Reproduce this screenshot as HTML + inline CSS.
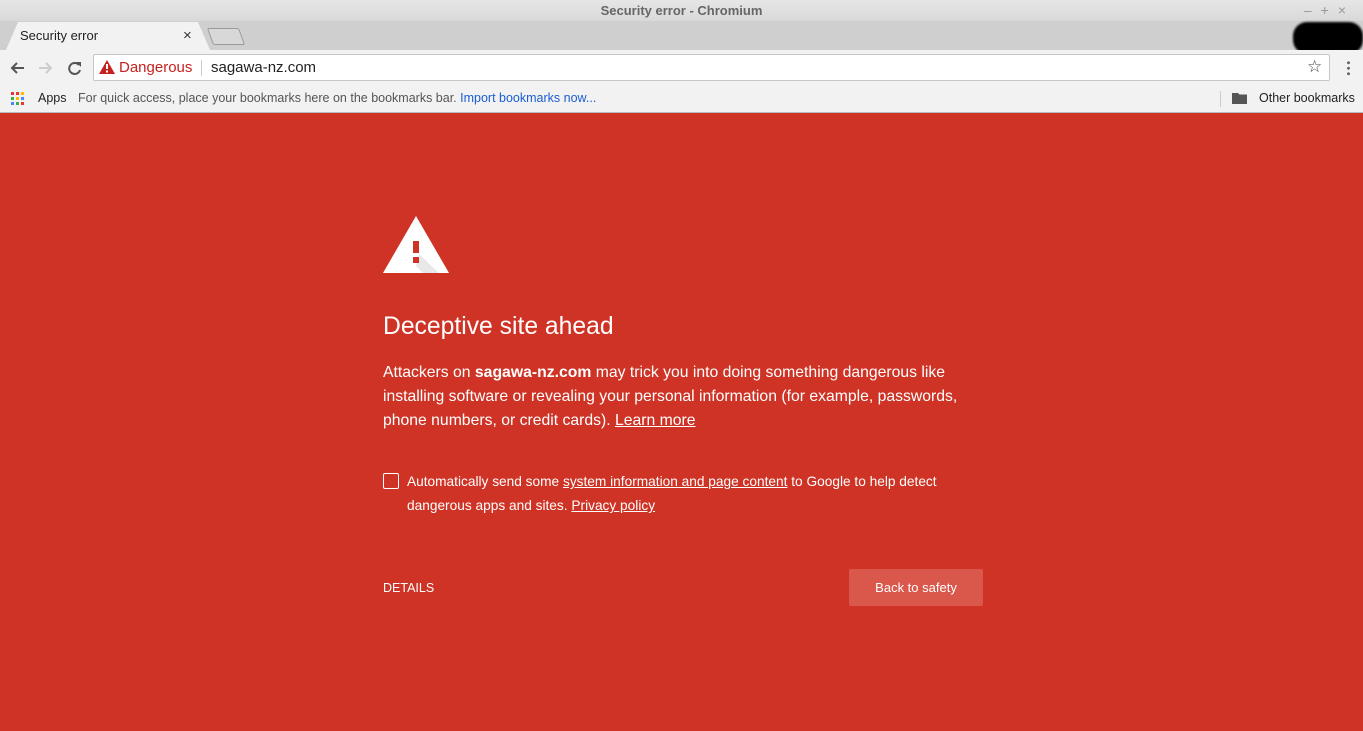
<!DOCTYPE html>
<html><head><meta charset="utf-8"><style>
*{margin:0;padding:0;box-sizing:border-box}
body{width:1363px;height:731px;overflow:hidden;font-family:"Liberation Sans",sans-serif;background:#ce3325;position:relative}
.abs{position:absolute}
#title{left:0;top:0;width:1363px;height:21px;background:linear-gradient(#e6e6e6,#d9d9d9);text-align:center;font-size:13px;font-weight:bold;color:#666;line-height:21px}
#tabbar{left:0;top:21px;width:1363px;height:29px;background:#cfcfcf}
#tab{left:6px;top:22px;width:204px;height:28px;background:#f2f2f2;clip-path:polygon(12px 0,192px 0,204px 28px,0 28px);}
#toolbar{left:0;top:50px;width:1363px;height:36px;background:#f2f2f2}
#omni{left:93px;top:54px;width:1237px;height:27px;background:#fff;border:1px solid #c6c6c6;border-radius:2px}
#bm{left:0;top:86px;width:1363px;height:27px;background:#f2f2f2;border-bottom:1px solid #bbb}
.w{color:#fff}
</style></head><body>
<div id="title" class="abs">Security error - Chromium</div>
<div class="abs" style="right:8px;top:2px;font-size:14px;color:#999;letter-spacing:9px">–+×</div>
<div id="tabbar" class="abs"></div>
<div id="tab" class="abs"></div>
<div class="abs" style="left:20px;top:28px;font-size:13px;color:#222">Security error</div>
<div class="abs" style="left:183px;top:27px;font-size:15px;color:#333">×</div>
<div class="abs" style="left:210px;top:28px;width:32px;height:17px;border:1px solid #999;background:#d8d8d8;transform:skewX(20deg);border-radius:2px"></div>
<div class="abs" style="left:1293px;top:22px;width:70px;height:32px;background:#000;border-radius:14px;filter:blur(1px)"></div>
<div id="toolbar" class="abs"></div>
<svg class="abs" style="left:8px;top:59px" width="80" height="18" viewBox="0 0 80 18">
<path d="M16 9H4M9 4L4 9l5 5" stroke="#555" stroke-width="2" fill="none"/>
<path d="M31 9h12M38 4l5 5-5 5" stroke="#ccc" stroke-width="2" fill="none"/>
<path d="M71 6A5.5 5.5 0 1 0 72 11" stroke="#555" stroke-width="2" fill="none"/><path d="M68 3h5v5z" fill="#555"/>
</svg>
<div id="omni" class="abs"></div>
<svg class="abs" style="left:99px;top:60px" width="16" height="14"><path d="M8 0L16 14H0z" fill="#c5221f"/><rect x="7" y="4" width="2" height="5" fill="#fff"/><rect x="7" y="10.5" width="2" height="2" fill="#fff"/></svg>
<div class="abs" style="left:119px;top:59px;font-size:15px;color:#c5221f">Dangerous</div>
<div class="abs" style="left:201px;top:60px;width:1px;height:16px;background:#ccc"></div>
<div class="abs" style="left:211px;top:59px;font-size:15px;color:#222">sagawa-nz.com</div>
<div class="abs" style="left:1307px;top:57px;font-size:17px;color:#444">☆</div>
<div class="abs" style="left:1347px;top:60px;width:3px;height:16px;background:radial-gradient(circle,#666 1.4px,transparent 1.6px) 0 0/3px 5.5px"></div>
<div id="bm" class="abs"></div>
<svg class="abs" style="left:11px;top:92px" width="13" height="13">
<rect x="0" y="0" width="3" height="3" fill="#e33"/><rect x="5" y="0" width="3" height="3" fill="#e33"/><rect x="10" y="0" width="3" height="3" fill="#fb0"/>
<rect x="0" y="5" width="3" height="3" fill="#4a4"/><rect x="5" y="5" width="3" height="3" fill="#fb0"/><rect x="10" y="5" width="3" height="3" fill="#48f"/>
<rect x="0" y="10" width="3" height="3" fill="#48f"/><rect x="5" y="10" width="3" height="3" fill="#4a4"/><rect x="10" y="10" width="3" height="3" fill="#e33"/></svg>
<div class="abs" style="left:38px;top:91px;font-size:12.5px;color:#222">Apps</div>
<div class="abs" style="left:78px;top:91px;font-size:12.5px;color:#555">For quick access, place your bookmarks here on the bookmarks bar. <span style="color:#1a5dd0">Import bookmarks now...</span></div>
<div class="abs" style="left:1220px;top:91px;width:1px;height:16px;background:#ccc"></div>
<svg class="abs" style="left:1232px;top:92px" width="15" height="12"><path d="M0 1h6l1.5 1.5H15V12H0z" fill="#555"/></svg>
<div class="abs" style="left:1259px;top:91px;font-size:12.5px;color:#222">Other bookmarks</div>

<svg class="abs" style="left:383px;top:216px" width="66" height="57"><path d="M33 0L66 57H0z" fill="#fff"/><path d="M36 38L56 57H40L33 50z" fill="#e8e8e8"/><rect x="30" y="25" width="6" height="12" fill="#ce3325"/><rect x="30" y="41" width="6" height="6" fill="#ce3325"/></svg>
<div class="abs w" style="left:383px;top:313px;font-size:24.7px">Deceptive site ahead</div>
<div class="abs w" style="left:383px;top:361px;font-size:15.75px;line-height:24px;width:660px">Attackers on <b>sagawa-nz.com</b> may trick you into doing something dangerous like<br>installing software or revealing your personal information (for example, passwords,<br>phone numbers, or credit cards). <u>Learn more</u></div>
<div class="abs" style="left:383px;top:473px;width:16px;height:16px;border:1.5px solid #fff;border-radius:2px"></div>
<div class="abs w" style="left:407px;top:470px;font-size:13.7px;line-height:24px;width:620px">Automatically send some <u>system information and page content</u> to Google to help detect<br>dangerous apps and sites. <u>Privacy policy</u></div>
<div class="abs w" style="left:383px;top:581px;font-size:12.5px">DETAILS</div>
<div class="abs w" style="left:849px;top:569px;width:134px;height:37px;background:#d9574b;border-radius:2px;font-size:13px;text-align:center;line-height:37px">Back to safety</div>
</body></html>
